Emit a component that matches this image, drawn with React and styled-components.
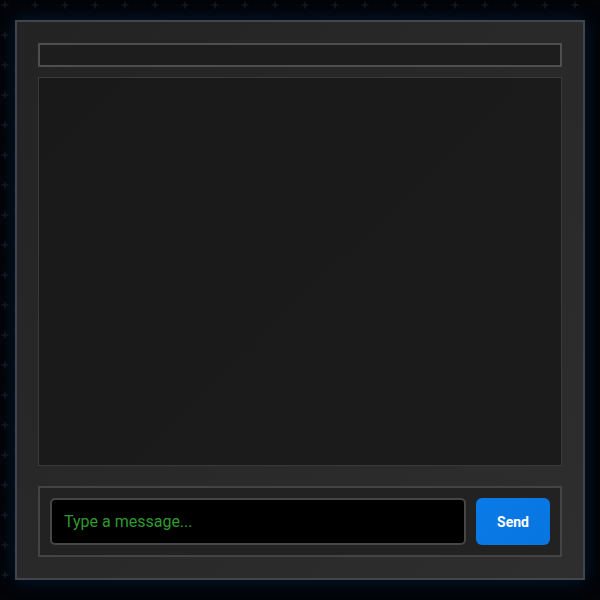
import React from 'react';
import styled, { createGlobalStyle } from 'styled-components';

const GlobalStyle = createGlobalStyle`
  html, body {
    margin: 0;
    padding: 0;
    background: #020407;
    font-family: Roboto, 'Liberation Sans', sans-serif;
  }
  * { box-sizing: border-box; }
`;

const Page = styled.div`
  position: relative;
  width: 600px;
  height: 600px;
  padding: 20px 15px;
  overflow: hidden;
`;

const Grid = styled.svg`
  position: absolute;
  inset: 0;
  width: 100%;
  height: 100%;
  z-index: 0;
`;

const Panel = styled.div`
  position: relative;
  z-index: 1;
  height: 560px;
  display: flex;
  flex-direction: column;
  gap: 10px;
  padding: 21px 21px 21px 21px;
  border: 2px solid #41464d;
  background: linear-gradient(135deg, #232323 0%, #2a2a2a 60%, #2e2e2e 100%);
  box-shadow: 0 0 18px rgba(10, 70, 140, 0.35);
`;

const Header = styled.div`
  height: 24px;
  border: 2px solid #4e4e4e;
  background: #1d1d1d;
  color: #ddd;
  font-size: 14px;
`;

const Messages = styled.div`
  flex: 1;
  border: 1px solid #3a3a3a;
  background: linear-gradient(135deg, #191919 0%, #1b1b1b 100%);
  margin-bottom: 10px;
`;

const InputBar = styled.form`
  display: flex;
  gap: 10px;
  padding: 10px;
  border: 2px solid #444;
  background: #222;
`;

const MessageInput = styled.input`
  flex: 1;
  height: 47px;
  padding: 0 12px;
  border: 2px solid #464646;
  border-radius: 5px;
  background: #000;
  color: #33b033;
  font-family: Roboto, 'Liberation Sans', sans-serif;
  font-size: 16px;
  outline: none;
  &::placeholder {
    color: #2f9a2f;
  }
`;

const SendButton = styled.button`
  width: 74px;
  height: 47px;
  border: none;
  border-radius: 6px;
  background: linear-gradient(135deg, #0a7ae8 0%, #0876e0 100%);
  color: #fff;
  font-family: Roboto, 'Liberation Sans', sans-serif;
  font-weight: 700;
  font-size: 14px;
  cursor: pointer;
`;

const App = () => {
  const [text, setText] = React.useState('');
  const onSubmit = (e) => {
    e.preventDefault();
    setText('');
  };
  return (
    <>
      <GlobalStyle />
      <Page>
        <Grid aria-hidden="true">
          <defs>
            <pattern id="plus" width="30" height="30" patternUnits="userSpaceOnUse" x="-10" y="-10">
              <path d="M11.5 15 H18.5 M15 11.5 V18.5" stroke="#17202b" strokeWidth="1" />
            </pattern>
          </defs>
          <rect width="100%" height="100%" fill="url(#plus)" />
        </Grid>
        <Panel>
          <Header />
          <Messages />
          <InputBar onSubmit={onSubmit}>
            <MessageInput
              type="text"
              placeholder="Type a message..."
              value={text}
              onChange={(e) => setText(e.target.value)}
            />
            <SendButton type="submit">Send</SendButton>
          </InputBar>
        </Panel>
      </Page>
    </>
  );
};

export default App;
